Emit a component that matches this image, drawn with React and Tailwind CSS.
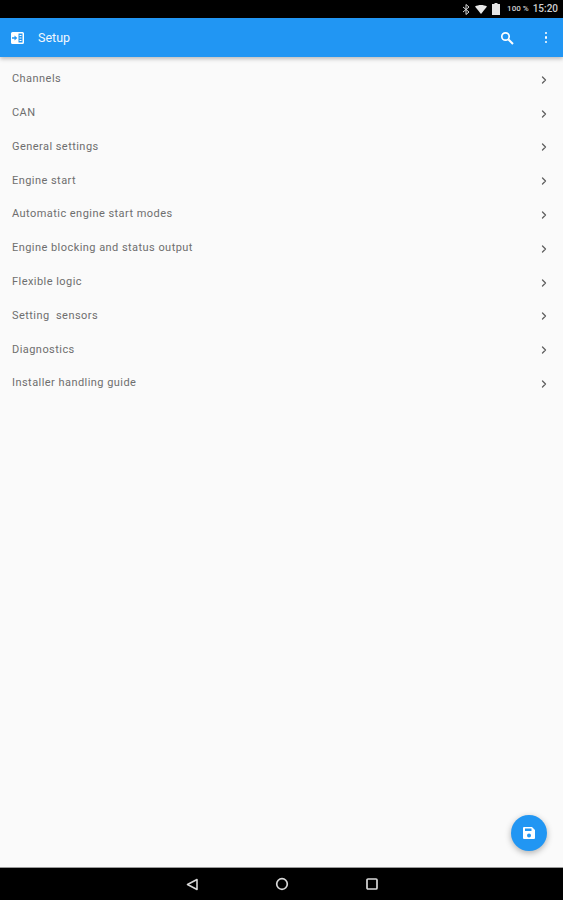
import React from 'react'
import { ChevronRight } from 'lucide-react'

const items = [
  'Channels',
  'CAN',
  'General settings',
  'Engine start',
  'Automatic engine start modes',
  'Engine blocking and status output',
  'Flexible logic',
  'Setting  sensors',
  'Diagnostics',
  'Installer handling guide',
]

const StatusBar = () => (
  <div className="h-[18px] bg-black flex items-center justify-end pr-[5px] text-[#d0d0d0] shrink-0">
    <svg width="8" height="11" viewBox="0 0 8 11" fill="none" stroke="#d8d8d8" strokeWidth="1">
      <path d="M1 3l6 5-3 2.500v-10L7 3 1 8" />
    </svg>
    <svg width="12" height="9" viewBox="0 0 12 9" className="ml-[5px]" fill="#e8e8e8">
      <path d="M0 1.500C3.500-.5 8.500-.5 12 1.500L6 9z" />
    </svg>
    <svg width="8" height="12" viewBox="0 0 8 12" className="ml-[5px]" fill="#e4e4e4">
      <path d="M2.500 0h3v1H8v11H0V1h2.500z" />
    </svg>
    <span className="ml-[7px] text-[8px] leading-none font-medium">100 %</span>
    <span className="ml-[4px] text-[10px] leading-none font-medium">15:20</span>
  </div>
)

const TopBar = () => (
  <div className="relative z-10 h-[39px] bg-[#2196f3] flex items-center text-white shrink-0 shadow-[0_2px_4px_rgba(0,0,0,0.25)]">
    <svg width="13" height="12" viewBox="0 0 13 12" className="ml-[11px]">
      <path fill="#fff" fillRule="evenodd" d="M1.500 0h10A1.500 1.500 0 0 1 13 1.500v9a1.500 1.500 0 0 1-1.500 1.500h-10A1.500 1.500 0 0 1 0 10.500v-9A1.500 1.500 0 0 1 1.500 0zM7.500 1.500v9h4v-9z" />
      <path fill="#2196f3" d="M1 5.300h2.500V3.500L6.300 6 3.500 8.500V6.700H1z" />
      <path fill="#fff" d="M8.500 3h2v1h-2zM8.500 5.500h2v1h-2zM8.500 8h2v1h-2z" />
    </svg>
    <span className="ml-[14px] mt-[1px] text-[12.500px] text-[#f2f8fe]">Setup</span>
    <svg width="14" height="14" viewBox="0 0 14 14" fill="none" stroke="#fff" className="ml-auto mr-[31px]">
      <circle cx="5.500" cy="5.500" r="3.700" strokeWidth="1.700" />
      <path d="M8.500 8.500L13 13" strokeWidth="2" />
    </svg>
    <div className="flex flex-col gap-[2px] mr-[16px]">
      <div className="w-[2.500px] h-[2.500px] bg-white rounded-full" />
      <div className="w-[2.500px] h-[2.500px] bg-white rounded-full" />
      <div className="w-[2.500px] h-[2.500px] bg-white rounded-full" />
    </div>
  </div>
)

const NavBar = () => (
  <div className="h-[33px] bg-black border-t border-[#9a9a9a] flex items-center justify-center gap-[77px] shrink-0">
    <svg width="12" height="13" viewBox="0 0 12 13" fill="none" stroke="#d8d8d8" strokeWidth="1.600" strokeLinejoin="round">
      <path d="M11 1.500v10L1.500 6.500z" />
    </svg>
    <svg width="14" height="14" viewBox="0 0 14 14" fill="none" stroke="#d8d8d8" strokeWidth="1.700">
      <circle cx="7" cy="7" r="5.300" />
    </svg>
    <svg width="12" height="12" viewBox="0 0 12 12" fill="none" stroke="#d8d8d8" strokeWidth="1.700">
      <rect x="1" y="1" width="10" height="10" rx="1" />
    </svg>
  </div>
)

export default function App() {
  return (
    <div className="w-[563px] h-[900px] flex flex-col bg-[#fafafa] overflow-hidden font-['Roboto',sans-serif]">
      <StatusBar />
      <TopBar />
      <div className="relative flex-1 pt-[5px]">
        {items.map((item) => (
          <div key={item} className="h-[33.800px] flex items-center pl-[12px] pr-[13px] justify-between">
            <span className="text-[11px] tracking-[0.45px] text-[#6e6e6e] whitespace-pre mt-[1px]">{item}</span>
            <ChevronRight size={12} strokeWidth={2.600} className="text-[#5f5f5f] mt-[2px]" />
          </div>
        ))}
        <button className="absolute right-[16px] bottom-[16px] w-[36px] h-[36px] rounded-full bg-[#2196f3] shadow-[0_2px_6px_rgba(0,0,0,0.3)] flex items-center justify-center">
          <svg width="12" height="12" viewBox="0 0 12 12">
            <path fill="#fff" fillRule="evenodd" d="M1 0h8l3 3v8a1 1 0 0 1-1 1H1a1 1 0 0 1-1-1V1a1 1 0 0 1 1-1zM2 1.500v2.500h6.500V1.500zM6 6.500a2 2 0 1 0 0 4 2 2 0 0 0 0-4z" />
          </svg>
        </button>
      </div>
      <NavBar />
    </div>
  )
}
